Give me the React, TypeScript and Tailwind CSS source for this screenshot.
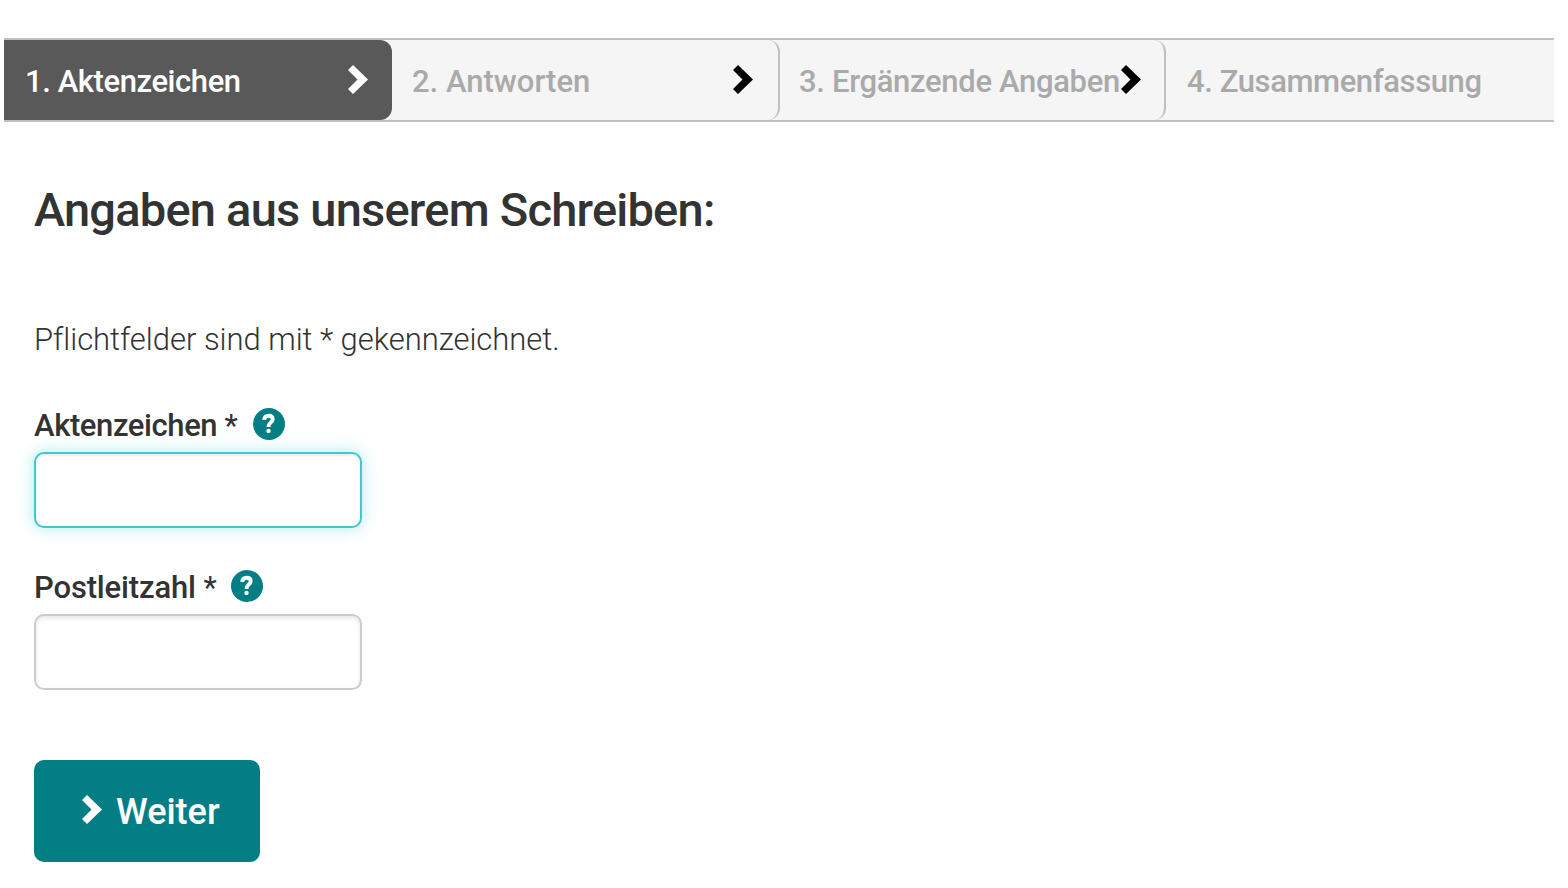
import clsx from "clsx";

interface StepProps {
  label: string;
  textClass: string;
  padding: string;
  active?: boolean;
  last?: boolean;
}

interface FieldProps {
  id: string;
  label: string;
  textClass: string;
  width: string;
  focused?: boolean;
}

const steps: Array<StepProps> = [
  {
    label: "1. Aktenzeichen",
    textClass: "tracking-[-0.42px]",
    padding: "pl-[21px] pr-6",
    active: true,
  },
  {
    label: "2. Antworten",
    textClass: "",
    padding: "pl-5 pr-[25px]",
  },
  {
    label: "3. Ergänzende Angaben",
    textClass: "tracking-[-0.33px]",
    padding: "pl-[19px] pr-[23px]",
  },
  {
    label: "4. Zusammenfassung",
    textClass: "tracking-[-0.4px]",
    padding: "pl-[21px]",
    last: true,
  },
];

const Chevron = ({ className }: { className: string }) => (
  <svg
    viewBox="0 0 20 29"
    className={clsx("h-[29px] w-5 shrink-0 fill-current", className)}
  >
    <path d="M5 0 20 14.5 5 29 0 24 9.5 14.5 0 5Z" />
  </svg>
);

const HelpIcon = () => (
  <svg viewBox="0 0 32 32" className="h-8 w-8 shrink-0">
    <circle cx="16" cy="16" r="16" fill="#047e85" />
    <path
      d="M11.2 11.9C11.4 8.8 13.2 7.7 15.6 7.7C18.2 7.7 19.7 9.2 19.7 11.2C19.7 14.6 15.5 14.3 15.5 18.9"
      fill="none"
      stroke="#fff"
      strokeWidth="3.9"
    />
    <circle cx="15.5" cy="22.9" r="2.2" fill="#fff" />
  </svg>
);

const Step = ({ label, textClass, padding, active, last }: StepProps) => (
  <li
    className={clsx(
      "flex h-20 items-center text-[31px] font-medium whitespace-nowrap",
      padding,
      active ? "bg-[#595959] text-white" : "text-[#aaaaaa]",
      !last && "rounded-r-[12px]",
      !last && !active && "border-r-2 border-[#bfbfbf]"
    )}
  >
    <span className={clsx("w-0 flex-1 pt-[5px]", textClass)}>{label}</span>
    {!last && (
      <Chevron
        className={clsx("mb-px", active ? "text-white" : "text-black")}
      />
    )}
  </li>
);

const Field = ({ id, label, textClass, width, focused }: FieldProps) => (
  <div>
    <div className="flex h-8 items-center">
      <label
        htmlFor={id}
        className={clsx(
          "pt-[3px] text-[31px] leading-8 font-medium whitespace-nowrap",
          textClass,
          width
        )}
      >
        {label} <span className="font-normal">*</span>
      </label>
      <HelpIcon />
    </div>
    <input
      id={id}
      type="text"
      className={clsx(
        "mt-3 block h-[76px] w-[328px] rounded-[10px] border-2 bg-white px-4 text-[31px] outline-none",
        focused
          ? "border-[#43c5d2] shadow-[inset_0_2px_2px_rgba(0,0,0,0.075),0_0_16px_rgba(67,210,215,0.45)]"
          : "border-[#cccccc] shadow-[inset_0_2px_4px_rgba(0,0,0,0.1)]"
      )}
    />
  </div>
);

const App = () => {
  return (
    <div className="min-h-screen bg-white pt-[38px] font-['Roboto','Liberation_Sans',sans-serif] text-[#333333]">
      <nav className="mr-[14px] ml-1 border-y-2 border-[#bfbfbf] bg-[#f5f5f5]">
        <ol className="grid grid-cols-[388px_388px_386px_1fr]">
          {steps.map((step) => (
            <Step key={step.label} {...step} />
          ))}
        </ol>
      </nav>

      <main className="flex flex-col items-start pl-[34px]">
        <h1 className="mt-[58px] h-[60px] text-[47px] leading-[60px] font-medium tracking-[-0.78px] whitespace-nowrap">
          Angaben aus unserem Schreiben:
        </h1>
        <p className="mt-20 h-10 text-[31px] leading-10 font-light tracking-[-0.04px] whitespace-nowrap">
          Pflichtfelder sind mit * gekennzeichnet.
        </p>
        <form className="mt-12 flex flex-col gap-[42px]">
          <Field
            id="aktenzeichen"
            label="Aktenzeichen"
            textClass="tracking-[-0.4px]"
            width="w-[219px]"
            focused
          />
          <Field
            id="postleitzahl"
            label="Postleitzahl"
            textClass="tracking-[-0.15px]"
            width="w-[197px]"
          />
          <button
            type="button"
            className="mt-7 flex h-[102px] w-[226px] items-center rounded-[10px] bg-[#047e85] pl-12 text-[36px] font-medium text-white"
          >
            <Chevron className="mb-[3px]" />
            <span className="pt-px pl-[14px]">Weiter</span>
          </button>
        </form>
      </main>
    </div>
  );
};

export default App;
